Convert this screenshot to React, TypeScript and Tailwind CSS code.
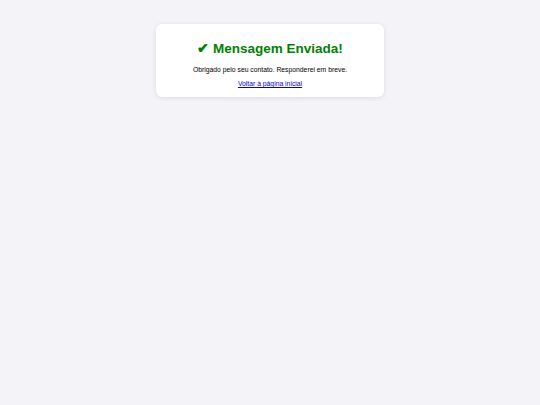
export default function App() {
  return (
    <div
      className="min-h-screen bg-[#f4f4f8] pt-[24px]"
      style={{ fontFamily: '"Liberation Sans", Arial, sans-serif' }}
    >
      <div className="mx-auto w-[228px] rounded-[6px] bg-white px-[10px] pt-[16px] pb-[9px] text-center shadow-[0_1px_5px_rgba(0,0,0,0.1)]">
        <h1 className="text-[13.5px] font-bold leading-[18px] text-[#008000]">✔ Mensagem Enviada!</h1>
        <p className="mt-[7px] text-[6.8px] leading-[9px] text-black">
          Obrigado pelo seu contato. Responderei em breve.
        </p>
        <p className="mt-[5px] text-[6.8px] leading-[9px]">
          <a href="#" className="text-[#0000ee] underline">
            Voltar à página inicial
          </a>
        </p>
      </div>
    </div>
  );
}
